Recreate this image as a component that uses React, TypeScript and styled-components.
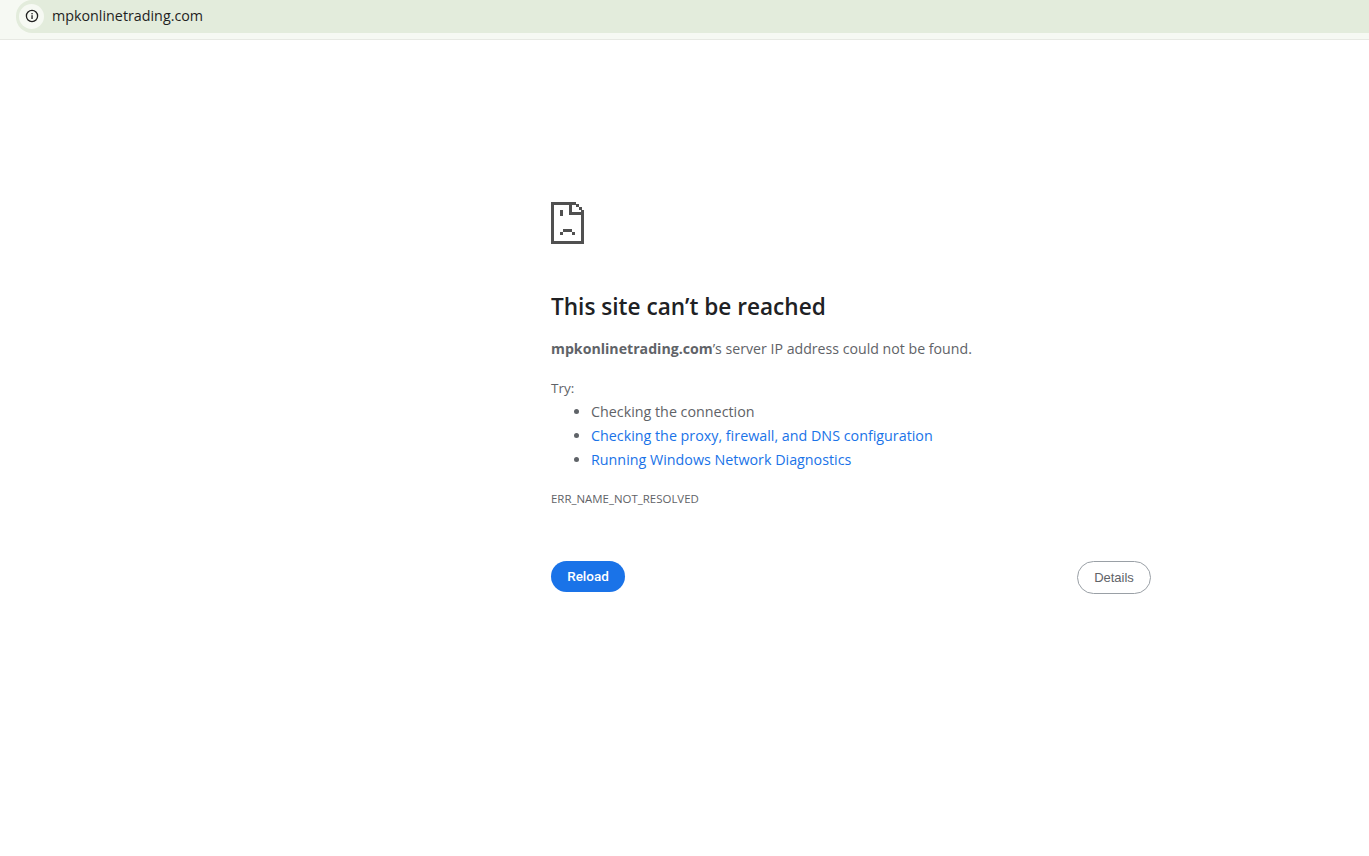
import React from "react";
import styled, { createGlobalStyle } from "styled-components";

const Global = createGlobalStyle`
  html, body { margin: 0; padding: 0; background: #fff; height: 100%; }
  body { font-family: "Open Sans", "Noto Sans", sans-serif; overflow: hidden; }
`;

const Page = styled.div`
  width: 1369px;
  height: 856px;
  display: flex;
  flex-direction: column;
`;

const TopBar = styled.header`
  height: 39px;
  flex: none;
  background: #f6f9f3;
  border-bottom: 1px solid #e7e9e3;
  padding-left: 16px;
`;

const Omnibox = styled.div`
  height: 33px;
  background: #e3ecdc;
  border-radius: 16px 0 0 16px;
  display: flex;
  align-items: center;
  padding-left: 3px;
  gap: 8px;
`;

const InfoChip = styled.span`
  width: 25px;
  height: 25px;
  margin-top: -1px;
  border-radius: 50%;
  background: #f6f9f3;
  display: flex;
  align-items: center;
  justify-content: center;
`;

const Url = styled.span`
  font-family: "Open Sans", sans-serif;
  font-size: 14.3px;
  line-height: 20px;
  margin-top: -2px;
  color: #1f1f1f;
`;

const Main = styled.main`
  width: 600px;
  margin-left: 551px;
  padding-top: 162px;
  color: #5f6368;
`;

const SadIcon = styled.svg`
  display: block;
  width: 34px;
  height: 42px;
`;

const Title = styled.h1`
  margin: 47px 0 0;
  font-size: 22.6px;
  line-height: 32px;
  font-weight: 600;
  color: #202124;
`;

const Summary = styled.p`
  margin: 14px 0 0;
  font-size: 14.17px;
  line-height: 24px;
  strong { font-weight: 700; }
`;

const TryLabel = styled.p`
  margin: 15px 0 0;
  font-size: 13.5px;
  line-height: 24px;
`;

const Suggestions = styled.ul`
  margin: 0;
  padding: 0 0 0 40px;
  font-size: 14.3px;
  line-height: 24px;
`;

const LinkText = styled.a`
  color: #1a73e8;
  text-decoration: none;
`;

const ErrorCode = styled.div`
  margin-top: 19px;
  font-size: 11.45px;
  line-height: 16px;
  color: #5f6368;
`;

const Actions = styled.div`
  margin-top: 54px;
  display: flex;
  justify-content: space-between;
  align-items: flex-start;
`;

const ReloadButton = styled.button`
  width: 74px;
  height: 31px;
  border: none;
  border-radius: 16px;
  background: #1a73e8;
  color: #fff;
  font: 500 13.5px Roboto, sans-serif;
  padding: 0 0 2px;
`;

const DetailsButton = styled.button`
  width: 74px;
  height: 33px;
  border: 1px solid #9aa0a6;
  border-radius: 17px;
  background: #fff;
  color: #5f6368;
  font: 400 13px "Liberation Sans", Arial, sans-serif;
  padding: 0;
`;

export default function App() {
  return (
    <Page>
      <Global />
      <TopBar>
        <Omnibox>
          <InfoChip>
            <svg width="14" height="14" viewBox="0 0 14 14" fill="none">
              <circle cx="7" cy="7" r="5.6" stroke="#1f1f1f" strokeWidth="1.3" />
              <rect x="6.4" y="6.2" width="1.3" height="3.8" fill="#1f1f1f" />
              <rect x="6.4" y="4" width="1.3" height="1.3" fill="#1f1f1f" />
            </svg>
          </InfoChip>
          <Url>mpkonlinetrading.com</Url>
        </Omnibox>
      </TopBar>
      <Main>
        <SadIcon viewBox="0 0 34 42" shapeRendering="crispEdges">
          <g fill="#505050">
            <rect x="0" y="0" width="3" height="42" />
            <rect x="0" y="39" width="33" height="3" />
            <rect x="30" y="8" width="3" height="34" />
            <rect x="0" y="0" width="25" height="3" />
            <rect x="18" y="0" width="3" height="13" />
            <rect x="18" y="10" width="15" height="3" />
            <rect x="25" y="2" width="3" height="3" />
            <rect x="28" y="5" width="3" height="3" />
            <rect x="9" y="8" width="3" height="6" />
            <rect x="12" y="27" width="9" height="3" />
            <rect x="9" y="30" width="3" height="3" />
            <rect x="21" y="30" width="3" height="3" />
          </g>
        </SadIcon>
        <Title>This site can’t be reached</Title>
        <Summary><strong>mpkonlinetrading.com</strong>’s server IP address could not be found.</Summary>
        <TryLabel>Try:</TryLabel>
        <Suggestions>
          <li>Checking the connection</li>
          <li><LinkText>Checking the proxy, firewall, and DNS configuration</LinkText></li>
          <li><LinkText>Running Windows Network Diagnostics</LinkText></li>
        </Suggestions>
        <ErrorCode>ERR_NAME_NOT_RESOLVED</ErrorCode>
        <Actions>
          <ReloadButton>Reload</ReloadButton>
          <DetailsButton>Details</DetailsButton>
        </Actions>
      </Main>
    </Page>
  );
}
